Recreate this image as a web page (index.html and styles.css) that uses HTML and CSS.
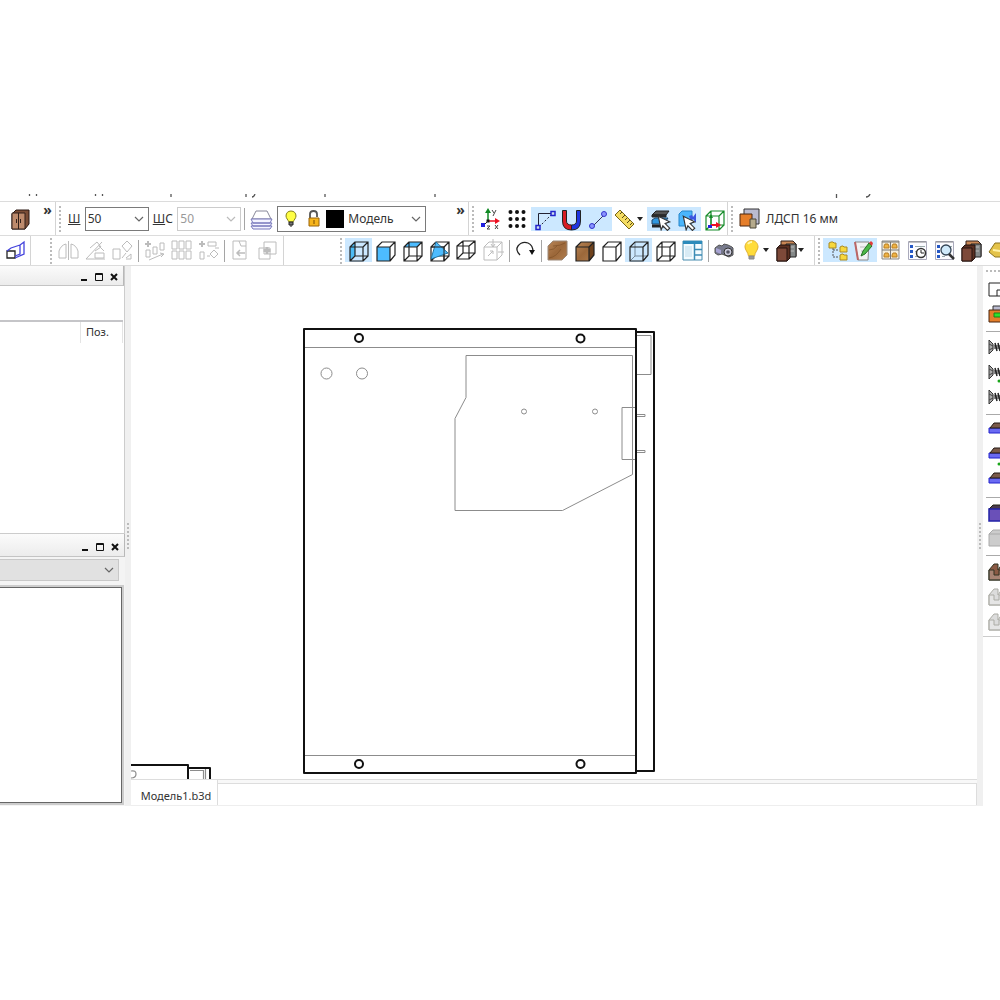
FILE: index.html
```html
<!DOCTYPE html>
<html lang="ru">
<head>
<meta charset="utf-8">
<title>Модель1.b3d</title>
<link rel="stylesheet" href="styles.css">
</head>
<body>
<svg class="sprite" aria-hidden="true">
  <defs>
    <linearGradient id="wood" x1="0" y1="0" x2="1" y2="1"><stop offset="0" stop-color="#b88557"/><stop offset=".5" stop-color="#9c683a"/><stop offset="1" stop-color="#b07d4e"/></linearGradient>
    <symbol id="wire" viewBox="0 0 27 24"><path d="M5 9h13v14H5zM10 4h13v14H10zM5 9l5-5M18 9l5-5M18 23l5-5M5 23l5-5" fill="none" stroke="currentColor" stroke-width="1.2"/></symbol>
    <symbol id="solid" viewBox="0 0 27 24"><path d="M5 9h13v14H5zM5 9l5-5h13v13l-5 6M18 9l5-5" fill="none" stroke="currentColor" stroke-width="1.2"/></symbol>
    <symbol id="boards" viewBox="0 0 27 24"><path d="M8 3h12l3 3v12h-5V8H8z" fill="#c98755" stroke="#33211a"/><path d="M13 6h10v13H13z" fill="#858989" stroke="#222"/><path d="M15 9h6M15 13h6" stroke="#bbb"/><path d="M4 10l3-3h10v13l-3 3H4z" fill="#5b3022" stroke="#24130f"/><path d="M4 10h10v13H4z" fill="#7d4939" stroke="#24130f"/></symbol>
    <symbol id="screw" viewBox="0 0 20 20"><path d="M1 2v14l4-4V6z" fill="#aaa" stroke="#333"/><path d="M5 7h15v4H5z" fill="#888"/><path d="M7 5l2 8M10 5l2 8M13 5l2 8M16 5l2 8M19 5l1 6" stroke="#222" stroke-width="1.500"/><path d="M1 6l4 2M1 12l4-2" stroke="#444"/></symbol>
    <symbol id="edge" viewBox="0 0 20 20"><path d="M1 7h19v5H1z" fill="#6a6af2" stroke="#2222cc"/><path d="M2 7l4-5h14v5z" fill="#7a5a4a" stroke="#221815"/></symbol>
    <symbol id="notch" viewBox="0 0 20 20"><path d="M1 8l5-6h4v6l4-6h6v16H1z" fill="currentColor" stroke="#332"/><path d="M1 8h5v5h5V8h9v10H1z" fill="#fff" fill-opacity=".25" stroke="#332"/></symbol>
    <symbol id="bulb" viewBox="0 0 27 24"><path d="M13.500 2.500c-4 0-6.500 3-6.500 6.500 0 3 3 5 3.500 9h6c.5-4 3.500-6 3.500-9 0-3.500-2.500-6.500-6.500-6.500z" fill="#ffdc3a" stroke="#e0b030"/><path d="M10 6c1-2 3-2 4-2" stroke="#fff8b0" stroke-width="2" fill="none"/><path d="M11 18h5v3h-5z" fill="#999" stroke="#888"/></symbol>
    <symbol id="chev" viewBox="0 0 10 6"><path d="M1 1l4 4 4-4" fill="none" stroke="currentColor" stroke-width="1.2"/></symbol>
    <symbol id="cursor" viewBox="0 0 14 14"><path d="M2 1l10 5-4 1.500 4 4-2 2-4-4-1.500 3.500z" fill="#fff" stroke="#333"/></symbol>
    <symbol id="list" viewBox="0 0 27 24"><path d="M4.500 3.500h18v18h-18z" fill="#fbfbff" stroke="#aab"/><path d="M5 4h17" stroke="#888"/><path d="M6 7h3v3H6zM6 12h3v3H6zM6 17h3v3H6z" fill="#2457c4"/><path d="M11 8.500h10M11 13.500h3M11 18.500h3" stroke="#9aa"/></symbol>
  </defs>
</svg>

<div class="app">
  <svg class="menu-edge" viewBox="0 0 1000 7" aria-hidden="true"><path d="M29.500 0v2M36.500 0v2M95.500 0v2M102.500 0v2M171 0v3M246 0v3M252 3q2 0 3-3M325 0v3M435 0v3M836.500 0v4M866 3q3 0 4-3" fill="none" stroke="#555" stroke-width="1.300"/></svg>

  <div class="bar bar-top">
    <div class="group g-cabinet">
      <button class="tool" aria-label="Шкаф"><svg viewBox="0 0 27 24"><path d="M5 7l4-4h13v14l-4 5H5z" fill="#7b4d36" stroke="#2a1812"/><path d="M5 6h13v16H5z" fill="#bd8a6c" stroke="#33211a"/><path d="M11.500 6v16M9.500 12v4M13.500 12v4" stroke="#33211a" fill="none"/></svg></button>
      <button class="more" aria-label="Ещё">»</button>
    </div>
    <div class="group g-thick">
      <i class="grip"></i>
      <label class="cap cap-w" for="w1"><u>Ш</u></label>
      <span class="combo"><select id="w1"><option>50</option></select><svg><use href="#chev"/></svg></span>
      <label class="cap cap-ws" for="w2"><u>Ш</u>С</label>
      <span class="combo off"><select id="w2" disabled><option>50</option></select><svg><use href="#chev"/></svg></span>
      <i class="sep sep-wide"></i>
      <button class="tool" aria-label="Слои"><svg viewBox="0 0 27 24"><path d="M4 12l4-8h11l4 8z" fill="#fff" stroke="#889"/><path d="M3 12h21l-2 4H5zM3 16h21l-2 3H5zM3 19h21l-2 3H5z" fill="#f4f4ff" stroke="#7777bb"/></svg></button>
      <span class="combo layer">
        <svg class="lamp" viewBox="0 0 12 18"><path d="M6 1C3 1 1 3 1 6c0 2 2 4 3 6h4c1-2 3-4 3-6 0-3-2-5-5-5z" fill="#ffff45" stroke="#86811b"/><path d="M4 12h4v3H4zM5 16h2" fill="#777" stroke="#222"/></svg>
        <svg class="lock" viewBox="0 0 12 18"><path d="M2 9V4q0-3 3.500-3T9 4v3" fill="none" stroke="#555" stroke-width="1.800"/><path d="M1 8h10v8H1z" fill="#f7b51c" stroke="#9a640a"/><path d="M6 10v4" stroke="#7a4a00"/></svg>
        <i class="swatch"></i>
        <select aria-label="Слой"><option>Модель</option></select><svg><use href="#chev"/></svg>
      </span>
      <button class="more" aria-label="Ещё">»</button>
    </div>
    <div class="group g-snap">
      <i class="grip"></i>
      <button class="tool" aria-label="Оси"><svg viewBox="0 0 27 24"><path d="M11 14V4" stroke="#118a25" stroke-width="1.500"/><path d="M8 6l3-5 3 5z" fill="#118a25"/><path d="M11 14h8" stroke="#e12" stroke-width="1.500"/><path d="M18 11l5 3-5 3z" fill="#e12"/><path d="M9.500 12.500h3v3h-3z" fill="#111"/><path d="M11 14l-5 5" stroke="#222"/><path d="M4 16h4v4H4z" fill="#2020e0"/><path d="M15 3l2 3M19 3l-3 6M18 18l3 4M21 18l-3 4M10 19h3l-3 3h3" fill="none" stroke="#444"/></svg></button>
      <button class="tool" aria-label="Сетка"><svg viewBox="0 0 27 24"><path d="M6.500 5h.01M13 5h.01M19.500 5h.01M6.500 12h.01M13 12h.01M19.500 12h.01M6.500 19h.01M13 19h.01M19.500 19h.01" stroke="#111" stroke-width="4" stroke-linecap="round"/></svg></button>
      <button class="tool on" aria-label="Привязка к углу"><svg viewBox="0 0 27 24"><path d="M7.500 20V6.500H21" fill="none" stroke="#223"/><path d="M8 20L21 7" stroke="#223" stroke-dasharray="2 2"/><path d="M5 18.500h4v4H5zM20 4.500h4v4h-4z" fill="#cde" stroke="#22c" stroke-width="1.500"/></svg></button>
      <button class="tool on" aria-label="Магнит"><svg viewBox="0 0 27 24"><path d="M4.500 3.500h4V14q0 4 5 4v5q-9 0-9-9z" fill="#d81c24" stroke="#222"/><path d="M22.500 3.500h-4V14q0 4-5 4v5q9 0 9-9z" fill="#1f35e0" stroke="#222"/></svg></button>
      <button class="tool on" aria-label="Привязка к линии"><svg viewBox="0 0 27 24"><path d="M8 19L19 8" stroke="#335"/><circle cx="7" cy="19" r="2.500" fill="#8a95ff" stroke="#33c"/><circle cx="19" cy="7" r="2.500" fill="#8a95ff" stroke="#33c"/></svg></button>
      <button class="tool drop" aria-label="Линейка"><svg viewBox="0 0 27 24"><path d="M3 8l5-5 14 14-5 5z" fill="#f4dc62" stroke="#766519"/><path d="M10 5l-2 2M13 8l-3 3M15 11l-2 2M18 13l-3 3M20 16l-2 2" stroke="#554a18"/></svg><i class="tri"></i></button>
      <button class="tool on" aria-label="Выбор панелей"><svg viewBox="0 0 27 24"><path d="M5 8l4-4h13l-3 4z" fill="#555" stroke="#222"/><path d="M5 8h14v2H5z" fill="#333" stroke="#222"/><path d="M5 13l3-2h13l-2 3v3H5z" fill="#3298df" stroke="#246"/><path d="M5 19h12" stroke="#222" stroke-width="3"/><use href="#cursor" x="9" y="8" width="16" height="16"/></svg></button>
      <button class="tool on" aria-label="Выбор фурнитуры"><svg viewBox="0 0 27 24"><path d="M5 7l3-3h10v12l-3 3H5z" fill="#4ab5fb" stroke="#2686ca"/><path d="M15 9l3-1 1 2 3-4v10l-3-4-2 2z" fill="#3b55e0"/><use href="#cursor" x="7" y="8" width="16" height="16"/></svg></button>
      <button class="tool" aria-label="Габариты"><svg class="green" viewBox="0 0 27 24"><use href="#wire"/><path d="M10 18V9" stroke="#118a25"/><path d="M8 11l2-4 2 4z" fill="#118a25"/><path d="M10 18h7" stroke="#e12" stroke-width="2"/><path d="M15 15l5 3-5 3z" fill="#e12"/><path d="M7 18h4v3H7z" fill="#22d"/></svg></button>
    </div>
    <div class="group g-material">
      <i class="grip"></i>
      <button class="material"><svg class="ico" viewBox="0 0 27 24"><path d="M8 2h15v15H8z" fill="#babbd0" stroke="#333"/><path d="M4 7h12v12H4z" fill="#e57e2a" stroke="#4b2611"/><path d="M14 12h6v9h-6z" fill="#b5aa8c" stroke="#4b4638"/></svg>ЛДСП 16 мм</button>
    </div>
  </div>

  <div class="bar bar-low">
    <div class="group g-plane">
      <button class="tool" aria-label="Плоскость"><svg viewBox="0 0 27 24"><path d="M5 13h8v7H5z" fill="#fff" stroke="#222" stroke-width="1.300"/><path d="M5 13l4-3 9-3M13 20l9-4V4l-4 3v9l-5 2" fill="none" stroke="#4444dd" stroke-width="1.300"/></svg></button>
    </div>
    <div class="group g-edit dim">
      <i class="grip"></i>
      <button class="tool" aria-label="Зеркало" disabled><svg viewBox="0 0 27 24"><path d="M13.500 3v19M11 6v14H4V13q2-6 7-7zM16 6v14h7V13q-2-6-7-7z"/></svg></button>
      <button class="tool" aria-label="Поворот" disabled><svg viewBox="0 0 27 24"><path d="M4 21h19M4 21L20 4M13 15h9v5h-9zM8 10l7-6 4 5-6 4M17 8l5 5"/></svg></button>
      <button class="tool" aria-label="Сдвиг" disabled><svg viewBox="0 0 27 24"><path d="M4 11h7v10H4zM13 8l5-5 5 5-5 6zM13 20l4-5M17 20l5-4v5h-5"/></svg></button>
      <i class="sep"></i>
      <button class="tool" aria-label="Распределить" disabled><svg viewBox="0 0 27 24"><path d="M5 12h4v7H5zM12 9h4v7h-4zM19 5h4v7h-4zM8 22l14-6M19 15l4 1-3 3"/><path d="M7 3v6M4 6h6" stroke-width="2"/></svg></button>
      <button class="tool" aria-label="Массив" disabled><svg viewBox="0 0 27 24"><path d="M4 3h5v8H4zM11 3h5v8h-5zM18 3h5v8h-5zM4 13h5v8H4zM11 13h5v8h-5zM18 13h5v8h-5z"/></svg></button>
      <button class="tool" aria-label="По контуру" disabled><svg viewBox="0 0 27 24"><path d="M5 14h4v7H5zM13 4h8v4h-8zM15 16l4-4 4 4-4 4zM12 18h3M20 10h4"/><path d="M7 3v6M4 6h6" stroke-width="2"/></svg></button>
      <i class="sep"></i>
      <button class="tool" aria-label="Вставить" disabled><svg viewBox="0 0 27 24"><path d="M6 3h13v18H6zM12 3l2 5h5"/><path d="M18 15h-7M13 12l-3 3 3 3" stroke-width="1.500"/></svg></button>
      <button class="tool" aria-label="Объединить" disabled><svg viewBox="0 0 27 24"><path d="M10 4h12v12H10zM5 10h11v11H5z"/><path d="M13 9v7M9.500 12.500h7" stroke-width="3"/></svg></button>
    </div>
    <div class="group g-view">
      <i class="grip"></i>
      <button class="tool on" aria-label="Вид слева"><svg viewBox="0 0 27 24"><path d="M5 9l5-5v14l-5 5z" fill="#4dbcf5"/><use href="#wire"/></svg></button>
      <button class="tool" aria-label="Вид спереди"><svg viewBox="0 0 27 24"><path d="M5 9h13v14H5z" fill="#4dbcff"/><use href="#solid"/></svg></button>
      <button class="tool" aria-label="Вид сверху"><svg viewBox="0 0 27 24"><path d="M5 9l5-5h13l-5 5z" fill="#4dbcff"/><use href="#wire"/></svg></button>
      <button class="tool" aria-label="Сечение"><svg viewBox="0 0 27 24"><use href="#wire"/><path d="M10 4L5 21l17-6z" fill="#4dbcff" stroke="#2575a0"/><path d="M18 9v14M5 9h13" stroke="#222"/></svg></button>
      <button class="tool" aria-label="Аксонометрия"><svg viewBox="0 0 27 24"><path d="M4 8h12v13H4zM10 3h12v12H10zM4 8l6-5M16 8l6-5M16 21l6-6M4 21l6-6" fill="none" stroke="#222" stroke-width="1.200"/></svg></button>
      <button class="tool dim" aria-label="Проекции" disabled><svg viewBox="0 0 27 24"><path d="M4 9h13v13H4zM4 9l5-5h13v13l-5 5M17 9l5-5M13 1v8M11 6l2 3 2-3M8 18l5-5M10 13h3v3M24 14h-6"/></svg></button>
      <i class="sep"></i>
      <button class="tool" aria-label="Повернуть"><svg viewBox="0 0 27 24"><path d="M8 17Q3 12 6 8q4-5 10-3 5 2 5 9" fill="none" stroke="#222" stroke-width="1.300"/><path d="M17 12h6l-3 5z" fill="#111"/></svg></button>
      <i class="sep"></i>
      <button class="tool" aria-label="Текстура"><svg viewBox="0 0 27 24"><path d="M4 8l5-5h14v14l-5 5H4z" fill="url(#wood)" stroke="#9b8879"/><path d="M5 12q5 0 8-4M5 20q7-1 12-9M9 8q7 0 12-3" fill="none" stroke="#71451e" stroke-opacity=".5"/></svg></button>
      <button class="tool" aria-label="Текстура с контуром"><svg viewBox="0 0 27 24"><path d="M5 9l5-5h13v13l-5 6H5z" fill="url(#wood)"/><path d="M18 9l5-5v13l-5 6z" fill="#6f421d"/><use href="#solid"/></svg></button>
      <button class="tool" aria-label="Без линий"><svg><use href="#solid"/></svg></button>
      <button class="tool on" aria-label="Невидимые тонкие"><svg viewBox="0 0 27 24"><path d="M10 4v14h13M5 23l5-5" fill="none" stroke="#789"/><use href="#solid"/></svg></button>
      <button class="tool" aria-label="Каркас"><svg><use href="#wire"/></svg></button>
      <button class="tool" aria-label="Окна"><svg viewBox="0 0 27 24"><path d="M4 3h19v19H4z" fill="#f4fbff" stroke="#498cae"/><path d="M4 3h19v3H4z" fill="#2d8bbb"/><path d="M15.500 6v16M15.500 11.500H23M15.500 17H23" stroke="#3b8bb5" stroke-width="1.500"/><path d="M6 8h7v11H6z" fill="#d8ebf5"/></svg></button>
      <i class="sep"></i>
      <button class="tool" aria-label="Снимок"><svg viewBox="0 0 27 24"><path d="M4 10l4-3 3 1 2-2 4 1 4 2 1 1v7l-4 2-7-3-4 1-3-2z" fill="#777a8c" stroke="#555"/><circle cx="17" cy="14" r="4" fill="#ccd" stroke="#333"/><circle cx="17" cy="14" r="1.800" fill="#556"/><path d="M5 10l5 2v4l-5-2z" fill="#a8a4d4"/></svg></button>
      <button class="tool drop" aria-label="Освещение"><svg><use href="#bulb"/></svg><i class="tri"></i></button>
      <button class="tool drop" aria-label="Материалы"><svg><use href="#boards"/></svg><i class="tri"></i></button>
    </div>
    <div class="group g-panels">
      <i class="grip"></i>
      <button class="tool on" aria-label="Структура"><svg viewBox="0 0 27 24"><path d="M10 10v9h6M10 12h6" fill="none" stroke="#555" stroke-dasharray="2 1"/><path d="M6 5l2-1h2l1 1h2v5H6zM17 9l2-1h1l1 1h3v5h-7zM17 17l2-1h1l1 1h3v5h-7z" fill="#f7d83c" stroke="#a98a25"/></svg></button>
      <button class="tool on" aria-label="Свойства"><svg viewBox="0 0 27 24"><path d="M5 4h14l-1 18H8z" fill="#f2f2f4" stroke="#888"/><path d="M5 4l3 18" stroke="#b66" stroke-width="2"/><path d="M10 9h6M11 13h4" stroke="#bbb"/><path d="M11 18l2-5 6-8 3 3-7 8z" fill="#4cb848" stroke="#247024"/><path d="M19 5l2-2 2 2-1 3z" fill="#e23b3b"/></svg></button>
      <button class="tool" aria-label="Библиотека"><svg viewBox="0 0 27 24"><path d="M5 3h17v18H5z" fill="#f5eedb" stroke="#888"/><path d="M5 4h17M5 12h17M13.500 4v17" stroke="#777"/><path d="M7 8l1-2h3l1 2v2H7zM15 8l1-2h3l1 2v2h-5zM7 17l1-2h3l1 2v2H7zM15 17l1-2h3l1 2v2h-5z" fill="#efb342" stroke="#b97f24"/></svg></button>
      <button class="tool" aria-label="История"><svg viewBox="0 0 27 24"><use href="#list"/><circle cx="17" cy="15" r="4.500" fill="#fff" stroke="#333" stroke-width="1.500"/><path d="M17 12v3h3" fill="none" stroke="#222"/></svg></button>
      <button class="tool" aria-label="Поиск"><svg viewBox="0 0 27 24"><use href="#list"/><circle cx="15" cy="12" r="5" fill="#cfe9fa" stroke="#345" stroke-width="1.300"/><path d="M18 16l5 5" stroke="#333" stroke-width="2.500"/></svg></button>
      <button class="tool" aria-label="Панели"><svg><use href="#boards"/></svg></button>
      <button class="tool" aria-label="Кромка"><svg viewBox="0 0 27 24"><path d="M4 14l6-9h17v14H10z" fill="#e4c34a" stroke="#8a7220"/><path d="M8 12l19 3" stroke="#fff2a8" stroke-width="2"/></svg></button>
    </div>
  </div>

  <main class="work">
    <aside class="dock">
      <section class="pane pane-list">
        <header class="title"><button class="win" aria-label="Свернуть"><svg viewBox="0 0 10 10"><path d="M2 8h6" stroke="#111" stroke-width="2"/></svg></button><button class="win" aria-label="Развернуть"><svg viewBox="0 0 10 10"><path d="M1.500 1.500h7v7h-7zM1 2.500h8" fill="none" stroke="#111"/></svg></button><button class="win" aria-label="Закрыть"><svg viewBox="0 0 10 10"><path d="M2 2l6 6M8 2l-6 6" stroke="#111" stroke-width="2"/></svg></button></header>
        <table class="grid"><thead><tr><td></td><th>Поз.</th></tr></thead></table>
      </section>
      <section class="pane pane-view">
        <header class="title"><button class="win" aria-label="Свернуть"><svg viewBox="0 0 10 10"><path d="M2 8h6" stroke="#111" stroke-width="2"/></svg></button><button class="win" aria-label="Развернуть"><svg viewBox="0 0 10 10"><path d="M1.500 1.500h7v7h-7zM1 2.500h8" fill="none" stroke="#111"/></svg></button><button class="win" aria-label="Закрыть"><svg viewBox="0 0 10 10"><path d="M2 2l6 6M8 2l-6 6" stroke="#111" stroke-width="2"/></svg></button></header>
        <span class="combo wide"><select aria-label="Объект"><option></option></select><svg><use href="#chev"/></svg></span>
        <div class="preview"></div>
      </section>
    </aside>
    <div class="splitter"><i class="grip"></i></div>
    <div class="center">
      <svg class="drawing" viewBox="131 266 846 513" preserveAspectRatio="xMinYMin meet" role="img" aria-label="Чертёж">
        <g fill="none" stroke="#8c8c8c">
          <path d="M304 347.500h332M304 755.500h332M466 355.500h166.500v119l-70 36H455v-92l11-21z"/>
          <path d="M636 407.500h-14v52h14M637 335.500h14v39h-14M637 414.500h8v2h-8M637 450.500h8v2h-8"/>
          <circle cx="326.500" cy="373.500" r="5.500"/><circle cx="362" cy="373.500" r="5.500"/>
          <circle cx="524" cy="411.500" r="2.500"/><circle cx="595" cy="411.500" r="2.500"/>
          <path d="M131 771q5-1 5 3t-5 4M190 770.500h13.500v8.500M205.500 769v10" stroke-width="1.200"/>
        </g>
        <g fill="none" stroke="#111" stroke-width="2" stroke-linejoin="round">
          <path d="M304 329h332v444H304zM636 332h18v439h-18"/>
          <circle cx="359" cy="338" r="4"/><circle cx="580.500" cy="338.500" r="4"/>
          <circle cx="359" cy="764" r="4"/><circle cx="580.500" cy="764" r="4"/>
          <path d="M131 765h57v14M188 768h22v11"/>
        </g>
      </svg>
      <nav class="tabs"><a class="tab" href="#model">Модель1.b3d</a><span class="tab-rest"></span></nav>
    </div>
    <div class="splitter"><i class="grip"></i></div>
    <div class="side">
      <i class="grip-h"></i>
      <button aria-label="Контур"><svg viewBox="0 0 20 20"><path d="M1 3h19v13H1z" fill="#fff" stroke="#222"/><path d="M9 16v-6h11M12 13h8" fill="none" stroke="#222"/></svg></button>
      <button aria-label="Панель"><svg viewBox="0 0 20 20"><path d="M5 1h15v12H5z" fill="#babbd0" stroke="#333"/><path d="M1 5h12v12H1z" fill="#e57e2a" stroke="#4b2611"/><path d="M6 8h14v4H6z" fill="#2de02d" stroke="#178517"/></svg></button>
      <i class="line"></i>
      <button aria-label="Шуруп"><svg><use href="#screw"/></svg></button>
      <button aria-label="Добавить шуруп"><svg viewBox="0 0 20 20"><use href="#screw"/><circle cx="11" cy="18" r="1.500" fill="#1aa51a"/></svg></button>
      <button aria-label="Удалить шуруп"><svg><use href="#screw"/></svg></button>
      <i class="line"></i>
      <button aria-label="Кромка"><svg><use href="#edge"/></svg></button>
      <button aria-label="Добавить кромку"><svg viewBox="0 0 20 20"><use href="#edge"/><circle cx="11" cy="18" r="1.500" fill="#1aa51a"/></svg></button>
      <button aria-label="Удалить кромку"><svg><use href="#edge"/></svg></button>
      <i class="line"></i>
      <button aria-label="Облицовка"><svg viewBox="0 0 20 20"><path d="M1 5l4-4h15v4" fill="#4a3a4e" stroke="#221"/><path d="M1 5h19v12H1z" fill="#6a50b8" stroke="#2222a8" stroke-width="1.500"/></svg></button>
      <button aria-label="Снять облицовку" disabled><svg viewBox="0 0 20 20"><path d="M1 5l4-4h15v4M1 5h19v12H1z" fill="#ccc" stroke="#aaa"/></svg></button>
      <i class="line"></i>
      <button class="brown" aria-label="Паз"><svg><use href="#notch"/></svg></button>
      <button class="pale" aria-label="Изменить паз" disabled><svg><use href="#notch"/></svg></button>
      <button class="pale" aria-label="Удалить паз" disabled><svg><use href="#notch"/></svg></button>
    </div>
  </main>
</div>
</body>
</html>
```

FILE: styles.css
```css
* { box-sizing: border-box; }
body { margin: 0; background: #fff; color: #333; font: 12px/16px "Noto Sans", "Open Sans", sans-serif; overflow-x: hidden; }
button { padding: 0; border: 0; background: none; font: inherit; color: inherit; }
svg, i { display: block; flex: none; }
.sprite { position: absolute; width: 0; height: 0; }
.app { padding: 194px 0; }
.menu-edge { width: 1000px; height: 7px; }

/* toolbars */
.bar { display: flex; overflow: hidden; border-top: 1px solid #dcdcdc; }
.bar-top { height: 34px; }
.bar-low { height: 31px; border-bottom: 1px solid #dcdcdc; }
.bar-low .tool { margin-bottom: 2px; }
.group { display: flex; flex: none; align-items: center; border-right: 1px solid #d4d4d4; }
.g-cabinet { width: 56px; padding-left: 7px; }
.g-thick { width: 413px; padding-left: 3px; }
.g-snap { width: 259px; padding-left: 3px; }
.g-material, .g-panels { flex: 1; border: 0; padding-left: 3px; }
.g-plane { width: 31px; padding-left: 2px; }
.g-edit { width: 253px; padding-left: 19px; }
.g-view { width: 531px; padding-left: 56px; }
.grip { width: 2px; height: 26px; margin-right: 3px; background: repeating-linear-gradient(#bbb 0 2px, transparent 2px 4px); }
.sep { width: 1px; height: 22px; margin: 0 2px; background: #a5a5a5; }
.sep-wide { margin: 0 3px; }
.tool { display: flex; flex: none; align-items: center; width: 27px; height: 24px; color: #222; }
.tool svg { width: 27px; height: 24px; }
.tool.on { background: #cce8ff; }
.tool.drop { width: 35px; }
.tri { margin-left: -2px; border: 3px solid transparent; border-top: 4px solid #222; border-bottom: 0; }
.tool .green { color: #178c2a; }
.dim svg { fill: none; stroke: #bcbcbc; }
.more { align-self: flex-start; width: 21px; padding-left: 6px; font-size: 14px; font-weight: 700; line-height: 20px; text-align: center; margin-top: -2px; }
.g-thick .more { margin-left: 21px; }
.cap-w { width: 17px; }
.cap { margin-left: 4px; }
.cap-ws { width: 25px; }

.combo { position: relative; display: flex; flex: none; align-items: center; width: 64px; height: 24px; border: 1px solid #7a7a7a; }
.combo select { flex: 1; min-width: 0; height: 22px; padding: 0 0 0 2px; border: 0; background: none; appearance: none; font: inherit; color: #333; opacity: 1; }
.combo > svg:last-child { position: absolute; right: 4px; width: 10px; height: 6px; color: #666; }
.combo.off { border-color: #ccc; }
.combo.off select { color: #999; }
.combo.off > svg:last-child { color: #bbb; }
.combo.layer { width: 149px; height: 26px; margin-left: 2px; padding-left: 7px; gap: 11px; }
.combo.layer select { padding: 0; margin-left: -7px; }
.lamp, .lock { width: 12px; height: 18px; }
.swatch { width: 18px; height: 18px; margin-left: -5px; background: #000; }
.material { display: flex; align-items: center; gap: 3px; }
.material svg { width: 27px; height: 24px; }

/* work area */
.work { display: grid; grid-template-columns: 125px 6px 1fr 6px 17px; }
.dock { display: flex; flex-direction: column; background: #f0f0f0; }
.title { display: flex; flex: none; justify-content: flex-end; align-items: center; gap: 5px; height: 20px; padding: 2px 4px 0 0; border-right: 1px solid #b8b8b8; border-bottom: 1px solid #c4c4c4; background: linear-gradient(#fbfbfb, #ececec); }
.win svg { width: 10px; height: 10px; }
.pane-list { height: 268px; display: flex; flex-direction: column; background: #fff; border-right: 1px solid #ccc; border-bottom: 1px solid #ccc; }
.grid { width: 123px; margin-top: 34px; border-top: 2px solid #c5c5c8; border-collapse: separate; border-spacing: 0; flex: none; font-size: 11px; }
.grid td, .grid th { padding: 0; height: 21px; font-weight: 400; border-right: 1px solid #e4e4e4; }
.grid th { width: 42px; padding: 0 0 2px 5px; text-align: left; }
.pane-view { display: flex; flex: 1; flex-direction: column; padding: 0 0 3px; background: #f4f4f4; }
.pane-view .title { height: 23px; padding-top: 4px; }
.combo.wide { width: 119px; height: 22px; margin: 2px 0 6px; border-color: #c8c8c8; border-left: 0; background: #e1e1e1; }
.preview { flex: 1; margin-right: 3px; border: solid #666; border-width: 1px 1px 1px 0; background: #fff; outline: 2px solid #ccc; }
.splitter { display: flex; align-items: center; background: #f0f0f0; }
.splitter .grip { margin: 0 2px; }
.center { min-width: 0; display: flex; flex-direction: column; background: #fff; }
.drawing { width: 100%; }
.tabs { display: flex; height: 27px; background: #f8f8f8; border-top: 1px solid #ddd; border-bottom: 1px solid #eee; }
.tab { flex: none; width: 87px; padding: 8px 0 0 4px; border-right: 1px solid #ddd; background: #fff; color: #333; font-size: 11px; text-align: center; text-decoration: none; }
.tab-rest { flex: 1; margin-top: 3px; background: #fff; border: solid #ddd; border-width: 1px 1px 0 0; }

.side { align-self: start; display: flex; flex-direction: column; overflow: hidden; padding: 4px 0 2px 3px; border-bottom: 1px solid #ccc; }
.grip-h { height: 2px; margin-bottom: 5px; background: repeating-linear-gradient(90deg, #bbb 0 2px, transparent 2px 4px); }
.side button { height: 25px; padding: 3px 0 2px 2px; }
.side button svg { width: 20px; height: 20px; }
.line { height: 1px; margin: 4px 0 3px; background: #aaa; }
.brown { color: #8a5a44; }
.pale { color: #aaa; opacity: .4; }
```
